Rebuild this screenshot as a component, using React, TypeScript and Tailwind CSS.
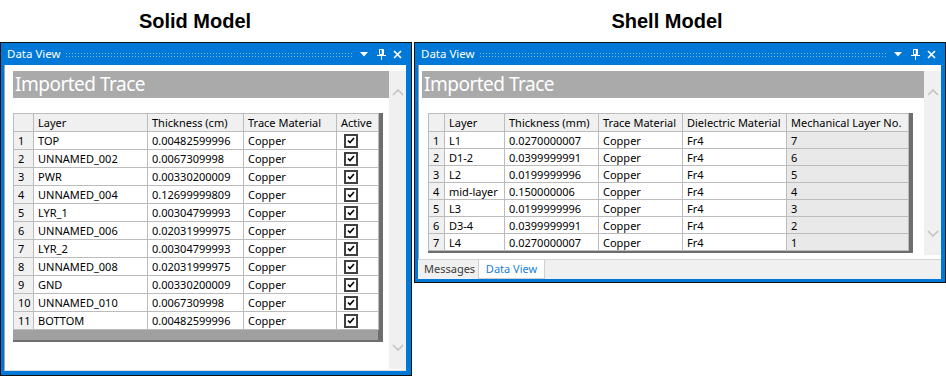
import React from "react";

type Col = { label: string; width: number };

const solidCols: Col[] = [
  { label: "", width: 20 },
  { label: "Layer", width: 114 },
  { label: "Thickness (cm)", width: 96 },
  { label: "Trace Material", width: 93 },
  { label: "Active", width: 42 },
];

const solidRows = [
  ["TOP", "0.00482599996"],
  ["UNNAMED_002", "0.0067309998"],
  ["PWR", "0.00330200009"],
  ["UNNAMED_004", "0.12699999809"],
  ["LYR_1", "0.00304799993"],
  ["UNNAMED_006", "0.02031999975"],
  ["LYR_2", "0.00304799993"],
  ["UNNAMED_008", "0.02031999975"],
  ["GND", "0.00330200009"],
  ["UNNAMED_010", "0.0067309998"],
  ["BOTTOM", "0.00482599996"],
];

const shellCols: Col[] = [
  { label: "", width: 16 },
  { label: "Layer", width: 60 },
  { label: "Thickness (mm)", width: 94 },
  { label: "Trace Material", width: 84 },
  { label: "Dielectric Material", width: 104 },
  { label: "Mechanical Layer No.", width: 122 },
];

const shellRows = [
  ["L1", "0.0270000007", "7"],
  ["D1-2", "0.0399999991", "6"],
  ["L2", "0.0199999996", "5"],
  ["mid-layer", "0.150000006", "4"],
  ["L3", "0.0199999996", "3"],
  ["D3-4", "0.0399999991", "2"],
  ["L4", "0.0270000007", "1"],
];

const cell = "border border-[#bcbcbc] px-[4px] py-0 leading-none whitespace-nowrap overflow-hidden text-left font-normal";

const Chevron = ({ up }: { up?: boolean }) => (
  <svg width="12" height="7" viewBox="0 0 12 7" className="block">
    <polyline
      points={up ? "1,6 6,1 11,6" : "1,1 6,6 11,1"}
      fill="none"
      stroke="#c4c4c4"
      strokeWidth="1.6"
    />
  </svg>
);

const TitleBar = () => (
  <div className="h-[22px] flex items-center bg-[#0078d7] text-white text-[11.5px] pl-[6px] pr-[5px]">
    <span className="leading-none">Data View</span>
    <div className="flex-1 h-[5px] ml-[4px] mr-[3px] bg-[radial-gradient(circle,#7fbcee_0.7px,transparent_1px)] bg-[length:3px_3px]" />
    <div className="w-[17px] flex justify-center">
      <svg width="8" height="5" viewBox="0 0 8 5">
        <polygon points="0,0 8,0 4,4.5" fill="#fff" />
      </svg>
    </div>
    <div className="w-[17px] flex justify-center">
      <svg width="10" height="12" viewBox="0 0 10 12">
        <path d="M3.5 1.5h4v5h-4z" fill="none" stroke="#fff" strokeWidth="1" />
        <path d="M6.5 1.5v5" stroke="#fff" strokeWidth="1.5" />
        <path d="M1 7.5h9" stroke="#fff" strokeWidth="1" />
        <path d="M5.5 8v4" stroke="#fff" strokeWidth="1" />
      </svg>
    </div>
    <div className="w-[17px] flex justify-center">
      <svg width="9" height="9" viewBox="0 0 9 9">
        <path d="M1 1L8 8M8 1L1 8" stroke="#fff" strokeWidth="1.7" />
      </svg>
    </div>
  </div>
);

const Scrollbar = () => (
  <div className="w-[17px] bg-[#f0f0f0] flex flex-col items-center justify-between py-[18px]">
    <Chevron up />
    <Chevron />
  </div>
);

const Banner = () => (
  <div className="h-[27px] bg-[#aaaaaa] flex items-center pl-[2px] text-white text-[19px] tracking-[-0.5px] leading-none">
    Imported Trace
  </div>
);

const Check = () => (
  <div className="w-[14px] h-[14px] border-2 border-[#404040] bg-white flex items-center justify-center ml-[3px]">
    <svg width="8" height="7" viewBox="0 0 8 7">
      <path d="M1 3.5L3 5.5L7 1" fill="none" stroke="#000" strokeWidth="1.6" />
    </svg>
  </div>
);

const Header = ({ cols }: { cols: Col[] }) => (
  <>
    <colgroup>
      {cols.map((c, i) => (
        <col key={i} style={{ width: c.width }} />
      ))}
    </colgroup>
    <thead>
      <tr className="h-[18px] bg-[#f0f0f0]">
        {cols.map((c, i) => (
          <th key={i} className={cell}>
            {c.label}
          </th>
        ))}
      </tr>
    </thead>
  </>
);

export default function App() {
  return (
    <div className="w-[946px] h-[376px] bg-white overflow-hidden font-['Noto_Sans',sans-serif] text-[11px] text-black">
      <div className="h-[42px] flex font-['Liberation_Sans',Arial,sans-serif] font-bold text-[20px]">
        <div className="w-[414px] flex items-center justify-center pr-[24px]">Solid Model</div>
        <div className="w-[532px] flex items-center justify-center pr-[26px]">Shell Model</div>
      </div>

      <div className="flex gap-[2px] items-start">
        {/* solid model */}
        <div className="w-[412px] h-[334px] border border-[#111] bg-[#0078d7] flex flex-col pl-[3px] pr-[5px] pb-[4px]">
          <div className="-ml-[3px] -mr-[5px]">
            <TitleBar />
          </div>
          <div className="flex-1 bg-white border-l border-[#a0a0a0] border-b border-b-[#dcdcdc] flex flex-col pt-[6px] pb-[1px]">
            <div className="flex-1 flex">
              <div className="flex-1 pl-[8px]">
                <Banner />
                <div className="mt-[15px] w-[370px] h-[229px] bg-[#a0a0a0] border-r-[5px] border-b-2 border-[#6e6e6e]">
                  <table className="table-fixed border-collapse w-[365px] bg-white">
                    <Header cols={solidCols} />
                    <tbody>
                      {solidRows.map((r, i) => (
                        <tr key={i} className="h-[18px]">
                          <td className={`${cell} bg-[#f0f0f0] text-center px-0`}>{i + 1}</td>
                          <td className={cell}>{r[0]}</td>
                          <td className={cell}>{r[1]}</td>
                          <td className={cell}>Copper</td>
                          <td className={`${cell} px-0`}>
                            <Check />
                          </td>
                        </tr>
                      ))}
                    </tbody>
                  </table>
                </div>
              </div>
              <Scrollbar />
            </div>
          </div>
        </div>

        {/* shell model */}
        <div className="w-[532px] h-[241px] border border-[#111] bg-[#0078d7] flex flex-col pl-[3px] pr-[4px] pb-[3px]">
          <div className="-ml-[3px] -mr-[4px]">
            <TitleBar />
          </div>
          <div className="flex-1 bg-white border-l border-[#a0a0a0] border-b border-b-[#d4d4d4] flex flex-col pt-[6px] pb-[4px]">
            <div className="flex-1 flex">
              <div className="flex-1 pl-[3px]">
                <Banner />
                <div className="mt-[15px] ml-[6px] w-[485px] bg-[#a0a0a0] border-r-[5px] border-b-2 border-[#6e6e6e]">
                  <table className="table-fixed border-collapse w-[480px] bg-white">
                    <Header cols={shellCols} />
                    <tbody>
                      {shellRows.map((r, i) => (
                        <tr key={i} className="h-[17px]">
                          <td className={`${cell} bg-[#f0f0f0] text-center px-0`}>{i + 1}</td>
                          <td className={cell}>{r[0]}</td>
                          <td className={cell}>{r[1]}</td>
                          <td className={cell}>Copper</td>
                          <td className={cell}>Fr4</td>
                          <td className={`${cell} bg-[#e9e9e9]`}>{r[2]}</td>
                        </tr>
                      ))}
                    </tbody>
                  </table>
                </div>
              </div>
              <Scrollbar />
            </div>
          </div>
          <div className="h-[19px] bg-[#f0f0f0] flex items-stretch text-[11px]">
            <div className="w-[61px] flex items-center pl-[6px] text-[#3c3c3c] border-r border-[#cfcfcf]">Messages</div>
            <div className="w-[66px] flex items-center justify-center bg-white text-[#1a7fd8] border-r border-b border-[#cfcfcf]">
              Data View
            </div>
          </div>
        </div>
      </div>
    </div>
  );
}
